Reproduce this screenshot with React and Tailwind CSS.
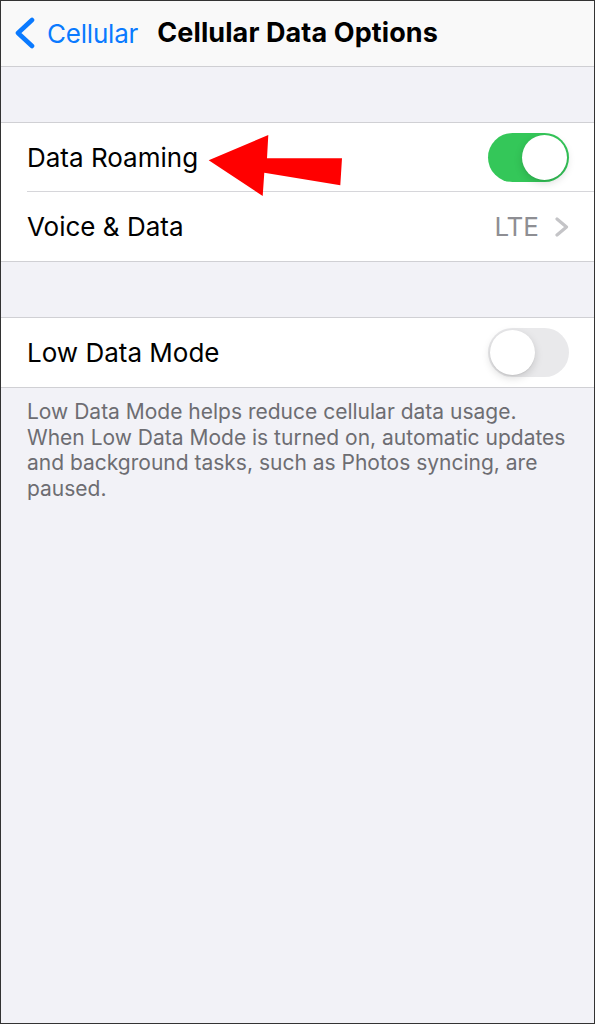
import React from 'react'

const font = { fontFamily: 'Inter, "Noto Sans", sans-serif' }

function Toggle({ on }) {
  return (
    <div
      className={`flex h-[49px] w-[81px] items-center rounded-full p-[2px] ${
        on ? 'justify-end bg-[#34c759]' : 'justify-start bg-[#e9e9eb]'
      }`}
    >
      <div className="h-[45px] w-[45px] rounded-full bg-white shadow-[0_3px_8px_rgba(0,0,0,0.15),0_1px_1px_rgba(0,0,0,0.06)]" />
    </div>
  )
}

function Row({ label, children, divider }) {
  return (
    <div className="flex h-[69px] items-stretch bg-white pl-[26px]">
      <div className={`flex flex-1 items-center justify-between pr-[25px] ${divider ? 'border-b border-[#d6d6da]' : ''}`}>
        <span className="text-[26px] text-black">{label}</span>
        {children}
      </div>
    </div>
  )
}

export default function App() {
  return (
    <div style={font} className="relative flex h-[1024px] w-[595px] flex-col border border-[#333333] bg-[#f2f2f7]">
      <header className="flex h-[66px] shrink-0 items-center border-b border-[#cfcfd3] bg-[#f9f9f9] pl-[13px]">
        <svg width="22" height="32" viewBox="0 0 22 32" className="mt-[-2px]">
          <path d="M18 3 L4 16 L18 29" fill="none" stroke="#0a7aff" strokeWidth="4.6" strokeLinecap="round" strokeLinejoin="round" />
        </svg>
        <span className="ml-[11px] text-[26px] tracking-[-0.2px] text-[#0a7aff]">Cellular</span>
        <span className="ml-[19px] text-[27px] font-bold tracking-[0.1px] text-black">Cellular Data Options</span>
      </header>

      <div className="h-[55px] shrink-0" />

      <section className="border-y border-[#d0d0d4]">
        <Row label="Data Roaming" divider>
          <Toggle on />
        </Row>
        <Row label="Voice & Data">
          <div className="flex items-center gap-[15px]">
            <span className="text-[26px] text-[#8e8e93]">LTE</span>
            <svg width="16" height="20" viewBox="0 0 16 20" className="-mr-[1px]">
              <path d="M3 2 L12.5 10 L3 18" fill="none" stroke="#c4c4c7" strokeWidth="3.2" strokeLinecap="round" strokeLinejoin="round" />
            </svg>
          </div>
        </Row>
      </section>

      <div className="h-[55px] shrink-0" />

      <section className="border-y border-[#d0d0d4]">
        <Row label="Low Data Mode">
          <Toggle />
        </Row>
      </section>

      <p className="px-[26px] pt-[11px] text-[21px] leading-[25.5px] text-[#6d6d72]">
        Low Data Mode helps reduce cellular data usage.
        <br />
        When Low Data Mode is turned on, automatic updates
        <br />
        and background tasks, such as Photos syncing, are
        <br />
        paused.
      </p>

      <svg width="140" height="66" viewBox="0 0 140 66" className="absolute left-[204px] top-[131px]">
        <polygon points="3.7,28.3 63.3,3 62,26.3 137,26.3 135.3,53.3 59.3,40.7 57.7,64" fill="#ff0000" />
      </svg>
    </div>
  )
}
